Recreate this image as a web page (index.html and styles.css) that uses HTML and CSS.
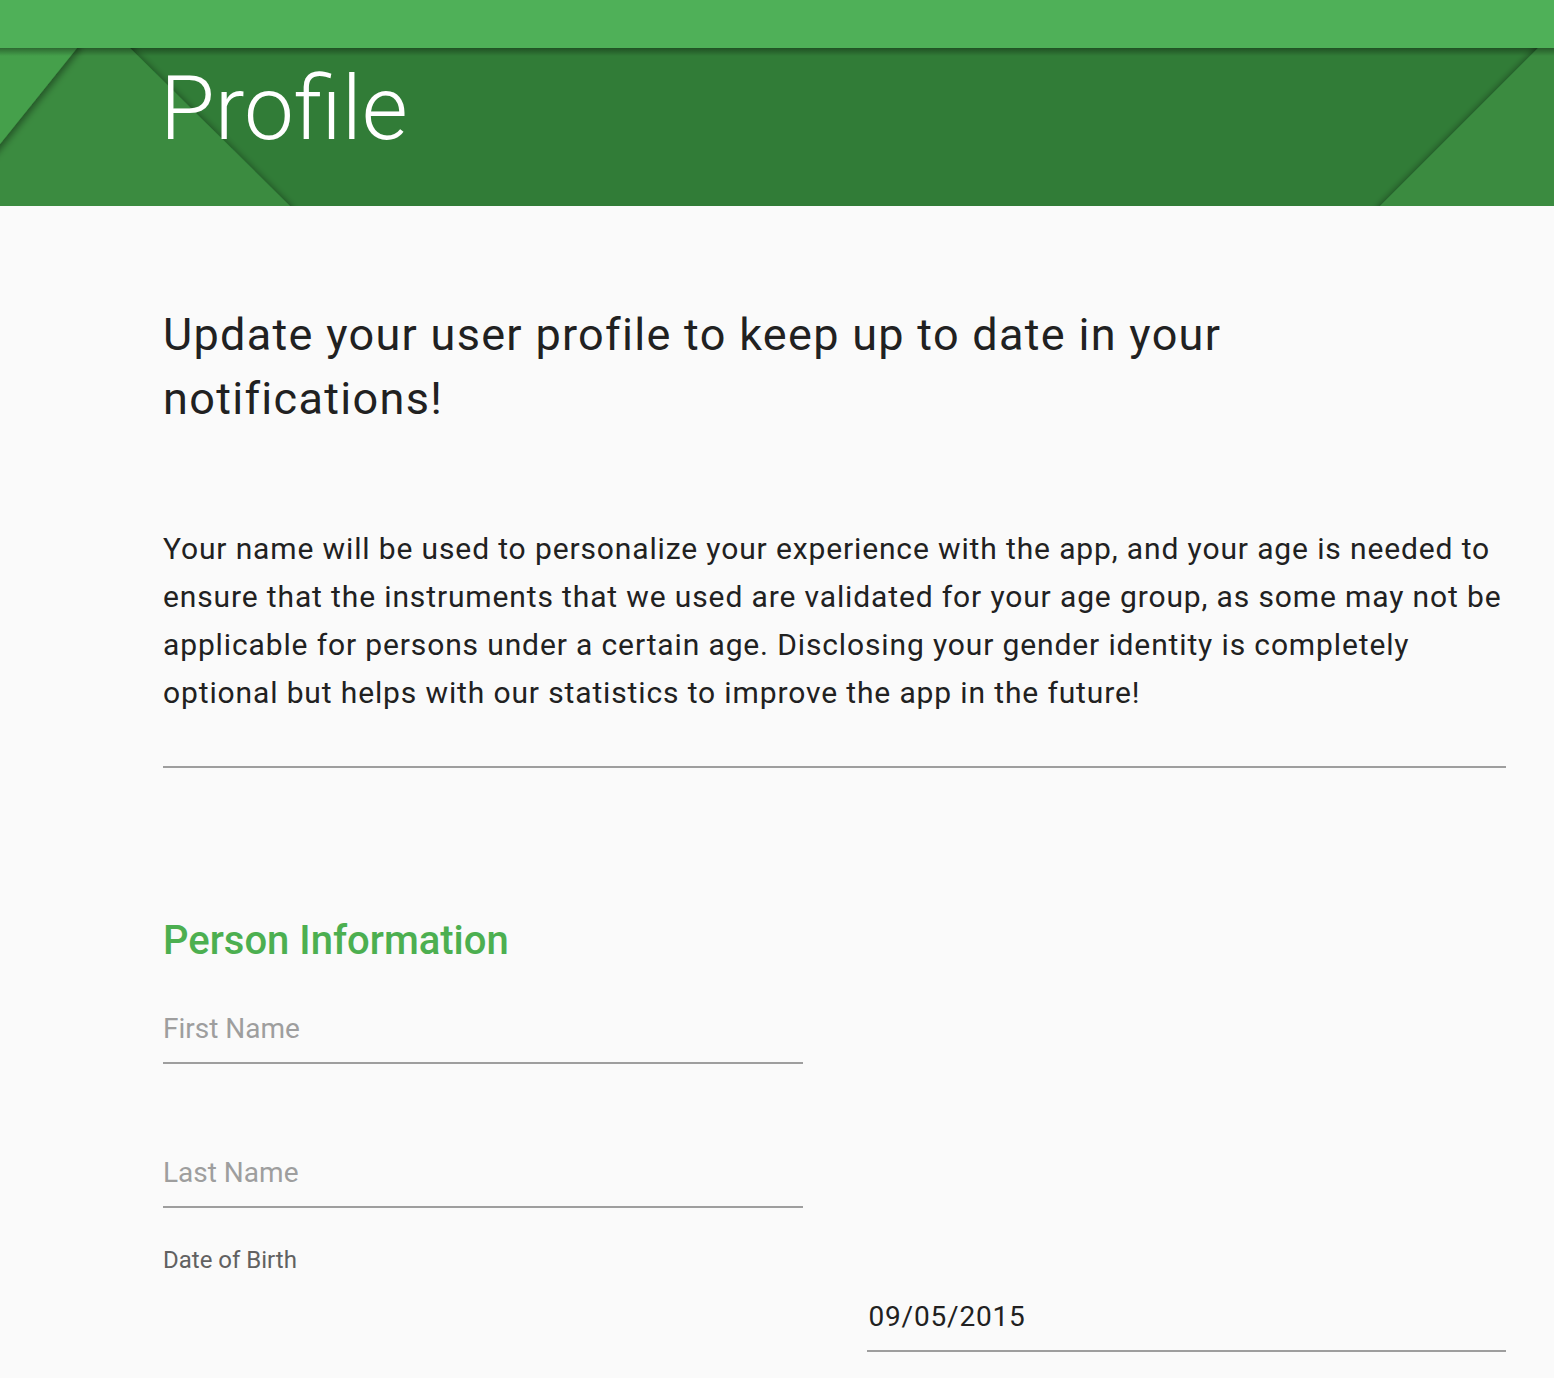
FILE: index.html
```html
<!DOCTYPE html>
<html lang="en">
<head>
<meta charset="utf-8">
<title>Profile</title>
<link rel="stylesheet" href="styles.css">
</head>
<body>
<header class="app-header">
  <div class="top-bar"></div>
  <div class="hero">
    <svg class="hero-bg" width="1554" height="158" viewBox="0 0 1554 158" preserveAspectRatio="none" aria-hidden="true">
      <defs>
        <filter id="sh" x="-20%" y="-20%" width="140%" height="140%">
          <feDropShadow dx="3" dy="2" stdDeviation="3.5" flood-color="#000" flood-opacity="0.4"/>
        </filter>
        <filter id="shl" x="-20%" y="-20%" width="140%" height="140%">
          <feDropShadow dx="-3" dy="2" stdDeviation="3.5" flood-color="#000" flood-opacity="0.4"/>
        </filter>
        <linearGradient id="topsh" x1="0" y1="0" x2="0" y2="1">
          <stop offset="0" stop-color="#000" stop-opacity="0.35"/>
          <stop offset="1" stop-color="#000" stop-opacity="0"/>
        </linearGradient>
      </defs>
      <rect x="0" y="0" width="1554" height="158" fill="#317c37"/>
      <polygon points="-20,-10 130,-10 130,0 290,158 290,170 -20,170" fill="#3a8b40" filter="url(#sh)"/>
      <polygon points="-20,-10 77,-10 77,0 0,96 -20,120" fill="#45a04b" filter="url(#sh)"/>
      <polygon points="1538,0 1538,-10 1570,-10 1570,170 1380,170 1380,158" fill="#3a8b40" filter="url(#shl)"/>
      <rect x="0" y="0" width="1554" height="8" fill="url(#topsh)"/>
    </svg>
    <h1 class="hero-title">Profile</h1>
  </div>
</header>
<main class="content">
  <h2 class="intro-title">Update your user profile to keep up to date in your notifications!</h2>
  <p class="intro-text">Your name will be used to personalize your experience with the app, and your age is needed to ensure that the instruments that we used are validated for your age group, as some may not be applicable for persons under a certain age. Disclosing your gender identity is completely optional but helps with our statistics to improve the app in the future!</p>
  <hr class="divider">
  <section class="form-section">
    <h3 class="section-title">Person Information</h3>
    <div class="form-grid">
      <div class="field"><span class="placeholder">First Name</span></div>
      <div></div>
      <div class="field field-gap"><span class="placeholder">Last Name</span></div>
      <div></div>
      <div class="label-cell"><span class="field-label">Date of Birth</span></div>
      <div class="field date-field"><span class="value">09/05/2015</span></div>
    </div>
  </section>
</main>
</body>
</html>
```
FILE: styles.css
```css
* { box-sizing: border-box; }
html, body { margin: 0; padding: 0; }
body {
  background: #fafafa;
  font-family: Roboto, "Noto Sans", "Liberation Sans", sans-serif;
  color: #212121;
  overflow: hidden;
}
.app-header { display: flex; flex-direction: column; }
.top-bar {
  height: 48px;
  background: #4fb058;
  position: relative;
  z-index: 2;
}
.hero {
  position: relative;
  height: 158px;
  background: #317c37;
  overflow: hidden;
  padding: 17px 0 0 160px;
}
.hero-bg {
  position: absolute;
  left: 0;
  top: 0;
  width: 100%;
  height: 100%;
}
.hero-title {
  position: relative;
  margin: 0;
  font-size: 89px;
  line-height: 88px;
  font-weight: 300;
  color: #fff;
}
.content {
  padding: 97px 48px 0 163px;
}
.intro-title {
  margin: 0;
  font-size: 45px;
  line-height: 64px;
  font-weight: 400;
  letter-spacing: 0.029em;
  color: #212121;
}
.intro-text {
  margin: 94px 0 0 0;
  font-size: 30px;
  line-height: 48px;
  font-weight: 400;
  letter-spacing: 0.029em;
  color: #212121;
}
.divider {
  margin: 49px 0 0 0;
  border: 0;
  height: 2px;
  background: #9e9e9e;
}
.section-title {
  margin: 149px 0 0 0;
  font-size: 40px;
  line-height: 48px;
  font-weight: 500;
  color: #4caf50;
}
.form-grid {
  display: grid;
  grid-template-columns: 1fr 1fr;
  column-gap: 64px;
  margin-top: 48px;
}
.field {
  border-bottom: 2px solid #9e9e9e;
  padding-bottom: 17px;
  font-size: 28px;
  line-height: 32px;
}
.field-gap { margin-top: 93px; }
.placeholder { color: #9e9e9e; }
.label-cell { padding-top: 36px; }
.field-label {
  font-size: 24px;
  line-height: 32px;
  color: #616161;
}
.date-field {
  margin-top: 93px;
  padding-left: 2px;
}
.value {
  color: #212121;
  letter-spacing: 0.029em;
}
```
